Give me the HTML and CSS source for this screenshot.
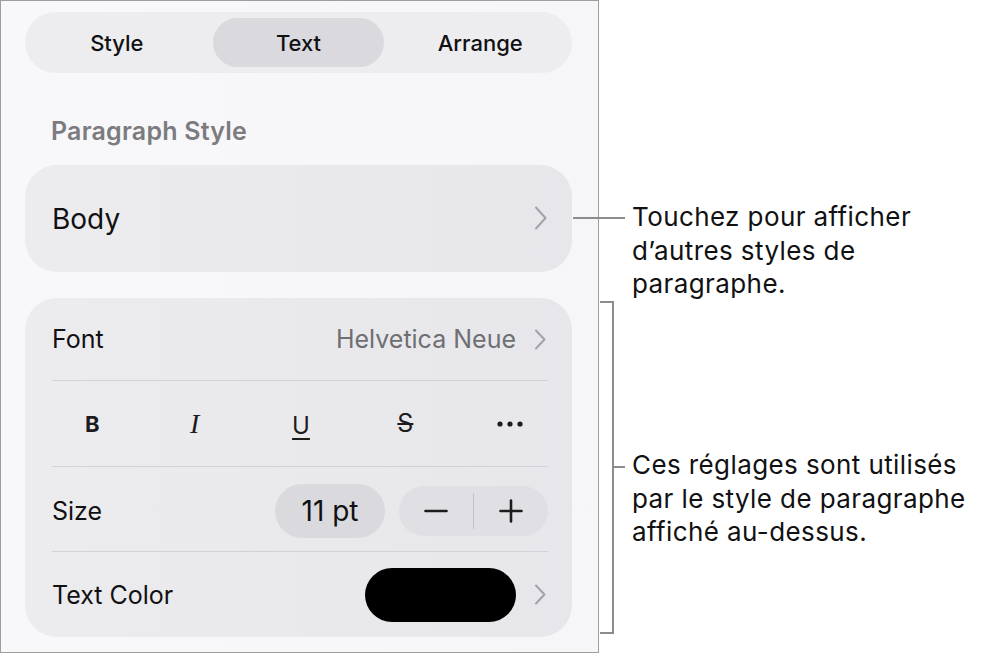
FILE: index.html
```html
<!DOCTYPE html>
<html lang="en">
<head>
<meta charset="utf-8">
<title>Text inspector</title>
<link rel="stylesheet" href="styles.css">
</head>
<body>
<div class="canvas">
  <div class="panel">
    <div class="segmented">
      <div class="seg">Style</div>
      <div class="seg selected">Text</div>
      <div class="seg">Arrange</div>
    </div>

    <div class="section-title">Paragraph Style</div>

    <div class="card body-card">
      <span class="body-label">Body</span>
      <svg class="chev-lg" width="15" height="24" viewBox="0 0 15 24"><path d="M3 1.5 L12.5 12 L3 22.5" fill="none" stroke="#a2a2a7" stroke-width="2" stroke-linecap="round" stroke-linejoin="round"/></svg>
    </div>

    <div class="card font-card">
      <div class="row">
        <span class="label">Font</span>
        <span class="value">Helvetica Neue
          <svg class="chev" width="15" height="21" viewBox="0 0 15 21"><path d="M3 1.5 L11.5 10.5 L3 19.5" fill="none" stroke="#a2a2a7" stroke-width="2" stroke-linecap="round" stroke-linejoin="round"/></svg>
        </span>
      </div>
      <div class="divider"></div>
      <div class="row styles-row">
        <span class="st st-b">B</span>
        <span class="st st-i">I</span>
        <span class="st st-u">U</span>
        <span class="st st-s">S</span>
        <span class="st st-more">
          <svg width="28" height="8" viewBox="0 0 28 8"><circle cx="4" cy="4" r="2.6" fill="#1c1c1e"/><circle cx="14" cy="4" r="2.6" fill="#1c1c1e"/><circle cx="24" cy="4" r="2.6" fill="#1c1c1e"/></svg>
        </span>
      </div>
      <div class="divider"></div>
      <div class="row size-row">
        <span class="label">Size</span>
        <div class="size-controls">
          <span class="size-pill">11 pt</span>
          <div class="stepper">
            <span class="step">
              <svg width="24" height="24" viewBox="0 0 24 24"><path d="M1.5 12 H22.5" stroke="#1c1c1e" stroke-width="2.6" stroke-linecap="round"/></svg>
            </span>
            <span class="step-sep"></span>
            <span class="step">
              <svg width="24" height="24" viewBox="0 0 24 24"><path d="M1.5 12 H22.5 M12 1.5 V22.5" stroke="#1c1c1e" stroke-width="2.6" stroke-linecap="round"/></svg>
            </span>
          </div>
        </div>
      </div>
      <div class="divider"></div>
      <div class="row color-row">
        <span class="label">Text Color</span>
        <span class="value">
          <span class="swatch"></span>
          <svg class="chev" width="15" height="21" viewBox="0 0 15 21"><path d="M3 1.5 L11.5 10.5 L3 19.5" fill="none" stroke="#a2a2a7" stroke-width="2" stroke-linecap="round" stroke-linejoin="round"/></svg>
        </span>
      </div>
    </div>
  </div>

  <div class="callout-line callout-line-1"></div>
  <div class="callout-text callout-text-1">Touchez pour afficher d’autres styles de paragraphe.</div>

  <div class="bracket"></div>
  <div class="callout-line callout-line-2"></div>
  <div class="callout-text callout-text-2">Ces réglages sont utilisés par le style de paragraphe affiché au-dessus.</div>
</div>
</body>
</html>
```

FILE: styles.css
```css
* { box-sizing: border-box; }

html, body {
  margin: 0;
  padding: 0;
  background: #ffffff;
}

body {
  font-family: Inter, "Noto Sans", "Liberation Sans", sans-serif;
  color: #1c1c1e;
}

.canvas {
  position: relative;
  width: 987px;
  height: 654px;
}

.panel {
  width: 599px;
  height: 653px;
  border: 1px solid #9e9e9e;
  background: linear-gradient(90deg, #f8f8fa 0%, #f6f6f8 100%);
  padding: 11px 26px 0 24px;
  display: flex;
  flex-direction: column;
}

/* segmented control */
.segmented {
  height: 61px;
  border-radius: 31px;
  background: #ededf0;
  padding: 6px;
  display: grid;
  grid-template-columns: 1fr 1fr 1fr;
  column-gap: 10px;
}

.seg {
  display: flex;
  align-items: center;
  justify-content: center;
  font-size: 22px;
  font-weight: 500;
  color: #111113;
  border-radius: 25px;
}

.seg.selected {
  background: #d9d9de;
}

.section-title {
  margin: 44px 0 20px 26px;
  height: 28px;
  line-height: 28px;
  font-size: 25px;
  font-weight: 600;
  letter-spacing: 0.2px;
  color: #7b7b80;
}

.card {
  background: linear-gradient(90deg, #ececee 0%, #e7e7eb 100%);
  border-radius: 32px;
}

.body-card {
  height: 107px;
  padding: 0 24px 0 27px;
  display: flex;
  align-items: center;
  justify-content: space-between;
}

.body-label {
  font-size: 28px;
  color: #111113;
}

.chev-lg { display: block; margin-top: -2px; }

.font-card {
  margin-top: 26px;
  height: 339px;
  display: flex;
  flex-direction: column;
}

.row {
  margin: 0 24px 0 27px;
  display: flex;
  align-items: center;
  justify-content: space-between;
  height: 84px;
}

.font-card .row:first-child { height: 82px; }
.styles-row { height: 85px; }
.color-row { height: 85px; }
.size-row { padding-top: 3px; }

.divider {
  margin: 0 24px 0 27px;
  height: 1px;
  background: #d2d2d6;
}

.label {
  font-size: 25px;
  color: #111113;
}

.value {
  display: flex;
  align-items: center;
  gap: 17px;
  font-size: 25px;
  color: #6e6e73;
}

.chev { display: block; }

/* style buttons */
.styles-row {
  margin: 0 10px 0 15px;
  display: grid;
  grid-template-columns: repeat(5, 1fr);
  align-items: center;
  justify-items: center;
}

.st {
  color: #1c1c1e;
  line-height: 1;
}

.st-b {
  font-size: 22px;
  font-weight: 700;
}

.st-i {
  font-family: "Liberation Serif", "DejaVu Serif", serif;
  font-style: italic;
  font-size: 28px;
  margin-left: -4px;
}

.st-u {
  font-size: 24px;
  text-decoration: underline;
  text-decoration-thickness: 2px;
  text-underline-offset: 4px;
  margin-top: 4px;
}

.st-s {
  font-size: 25px;
  text-decoration: line-through;
  text-decoration-thickness: 2px;
}

.st-more svg { display: block; }

/* size controls */
.size-controls {
  display: flex;
  align-items: center;
  gap: 14px;
}

.size-pill {
  width: 110px;
  height: 54px;
  border-radius: 27px;
  background: #dadade;
  display: flex;
  align-items: center;
  justify-content: center;
  font-size: 28px;
  color: #111113;
}

.stepper {
  width: 149px;
  height: 50px;
  border-radius: 25px;
  background: #e0e0e4;
  display: flex;
  align-items: center;
}

.step {
  flex: 1;
  display: flex;
  align-items: center;
  justify-content: center;
}

.step svg { display: block; }

.step-sep {
  width: 1px;
  height: 36px;
  background: #c4c4c8;
}

.swatch {
  width: 151px;
  height: 54px;
  border-radius: 27px;
  background: #000000;
}

/* callouts */
.callout-line {
  position: absolute;
  height: 2px;
  background: #8c8c8c;
}

.callout-line-1 {
  left: 573px;
  top: 217px;
  width: 52px;
}

.callout-line-2 {
  left: 612px;
  top: 466px;
  width: 13px;
}

.bracket {
  position: absolute;
  left: 600px;
  top: 301px;
  width: 14px;
  height: 333px;
  border: 2px solid #8c8c8c;
  border-left: none;
}

.callout-text {
  position: absolute;
  left: 632px;
  font-size: 26px;
  letter-spacing: 0.4px;
  line-height: 33.5px;
  color: #111113;
}

.callout-text-1 { top: 200px; width: 300px; }
.callout-text-2 { top: 448px; width: 345px; }
```
